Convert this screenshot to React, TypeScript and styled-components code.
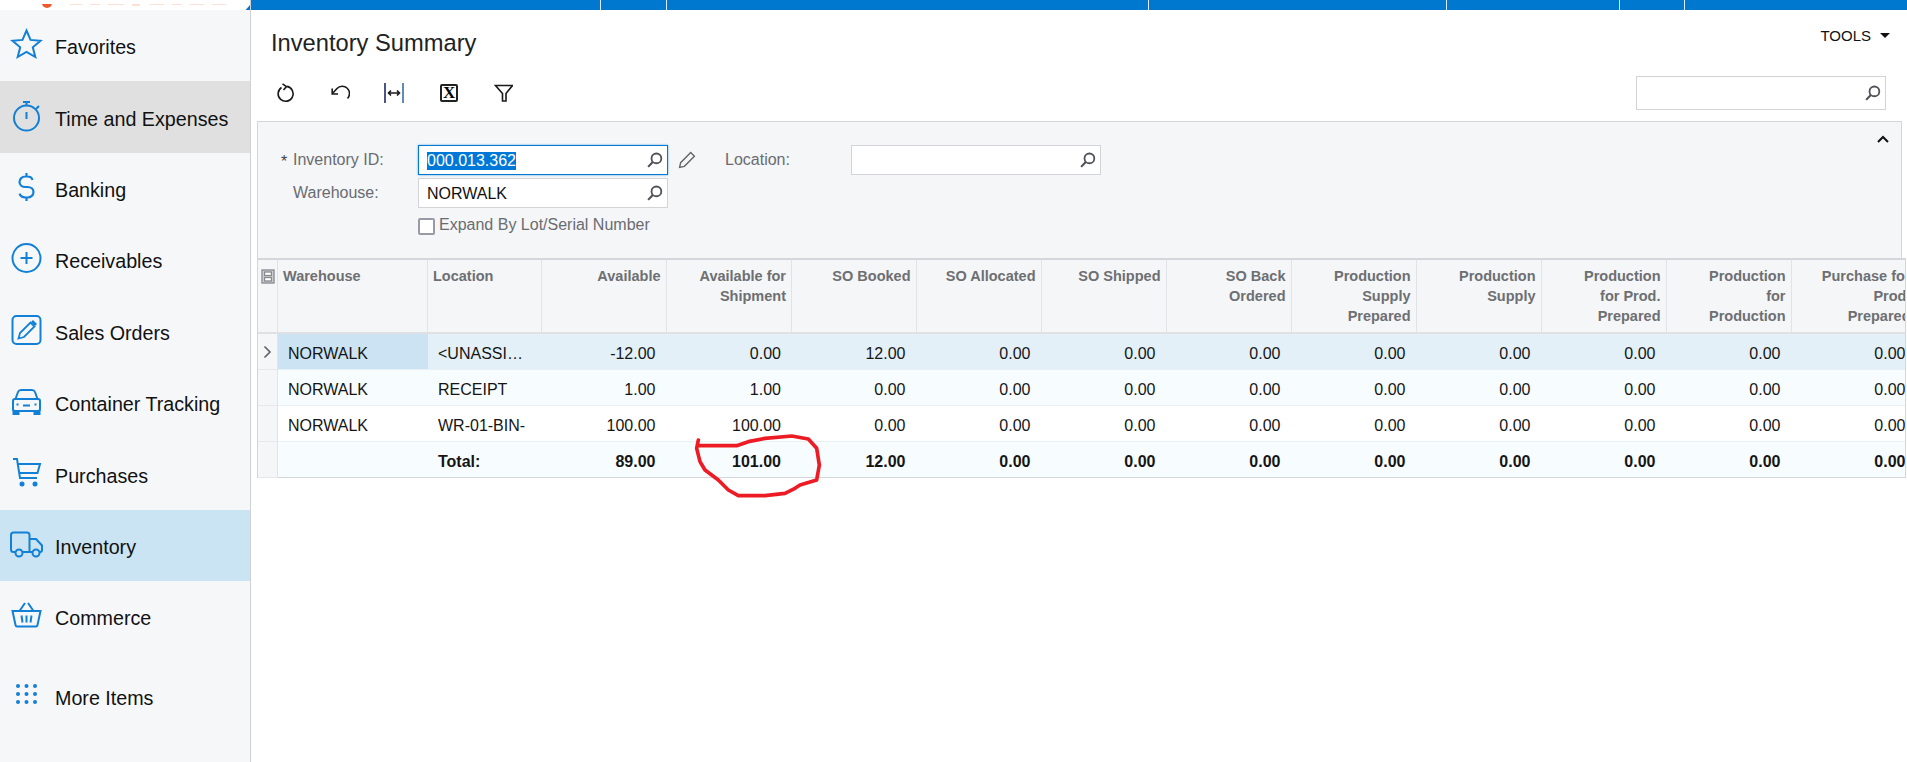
import { ReactNode } from "react";
import styled, { createGlobalStyle } from "styled-components";

const GlobalStyle = createGlobalStyle`
  html, body {
    margin: 0;
    padding: 0;
    background: #fff;
    font-family: "Liberation Sans", Arial, sans-serif;
    overflow: hidden;
  }
  * { box-sizing: border-box; }
`;

const Page = styled.div`
  position: relative;
  display: flex;
  width: 1907px;
  height: 762px;
  overflow: hidden;
`;

const Sidebar = styled.aside`
  flex: 0 0 251px;
  display: flex;
  flex-direction: column;
  background: #f6f7f9;
  border-right: 1px solid #cfd1d5;
`;

const LogoStrip = styled.div`
  height: 10px;
  background: #fff;
  overflow: hidden;
`;

const NavItem = styled.div<{ $active?: "hover" | "current"; $tall?: boolean }>`
  display: flex;
  align-items: center;
  flex: 0 0 ${(p) => (p.$tall ? "88px" : "71.4px")};
  padding-left: 10px;
  background: ${(p) =>
    p.$active === "hover" ? "#e0e0e0" : p.$active === "current" ? "#cbe4f3" : "transparent"};
`;

const NavIcon = styled.svg`
  flex: 0 0 33px;
  width: 33px;
  height: 32px;
  margin-bottom: 3px;
  fill: none;
  stroke: #1280d6;
  stroke-width: 2;
`;

const NavLabel = styled.span`
  margin-left: 12px;
  margin-top: 4px;
  font-size: 19.7px;
  color: #111;
`;

const Main = styled.main`
  flex: 1;
  min-width: 0;
  display: flex;
  flex-direction: column;
`;

const TopBar = styled.div`
  display: flex;
  height: 10px;
  background: #0078cf;
`;

const TopCell = styled.div<{ $w: number }>`
  flex: 0 0 ${(p) => p.$w}px;
  border-right: 1px solid #dcecf8;
`;

const TitleRow = styled.div`
  display: flex;
  justify-content: space-between;
  height: 65px;
  padding: 20px 17px 0 20px;
`;

const Title = styled.h1`
  margin: 0;
  font-size: 23.7px;
  font-weight: 400;
  line-height: 27px;
  color: #222;
`;

const Tools = styled.div`
  display: flex;
  align-items: center;
  gap: 9px;
  height: 10px;
  font-size: 15px;
  color: #111;
`;

const Caret = styled.span`
  width: 0;
  height: 0;
  border-left: 5px solid transparent;
  border-right: 5px solid transparent;
  border-top: 5px solid #111;
`;

const Toolbar = styled.div`
  display: flex;
  align-items: center;
  justify-content: space-between;
  height: 35px;
  padding: 0 21px 0 7px;
`;

const ToolButtons = styled.div`
  display: flex;
`;

const ToolButton = styled.div`
  flex: 0 0 54.5px;
  display: flex;
  align-items: center;
  justify-content: center;
`;

const ToolIcon = styled.svg`
  width: 20px;
  height: 20px;
  fill: none;
  stroke: #1a1a1a;
  stroke-width: 1.6;
`;

const ExcelBox = styled.span`
  display: flex;
  align-items: center;
  justify-content: center;
  width: 18px;
  height: 18px;
  margin-left: 1px;
  border: 2px solid #222;
  border-radius: 2px;
  font-family: "Liberation Serif", serif;
  font-size: 17px;
  font-weight: 700;
  line-height: 1;
  color: #000;
`;

const Field = styled.div<{ $focused?: boolean; $h?: number }>`
  flex: 0 0 250px;
  display: flex;
  align-items: center;
  justify-content: space-between;
  width: 250px;
  height: ${(p) => p.$h ?? 30}px;
  padding: 1px 4px 0 8px;
  background: #fff;
  border: 1px solid ${(p) => (p.$focused ? "#0078d4" : "#d2d4d8")};
  box-shadow: ${(p) => (p.$focused ? "0 0 2px #58a6e0" : "none")};
  font-size: 16px;
  color: #111;
`;

const Selected = styled.span`
  background: #0078d7;
  color: #fff;
`;

const SearchIcon = styled.svg`
  flex: 0 0 17px;
  width: 17px;
  height: 17px;
  fill: none;
  stroke: #4f5258;
  stroke-width: 1.7;
`;

const FormPanel = styled.section`
  position: relative;
  height: 137px;
  margin: 11px 5px 0 6px;
  padding-top: 23px;
  background: #f5f6f8;
  border: 1px solid #d4d6da;
  border-bottom: 0;
`;

const Collapse = styled.svg`
  position: absolute;
  top: 13px;
  right: 12px;
  width: 12px;
  height: 8px;
  fill: none;
  stroke: #111;
  stroke-width: 2;
`;

const FormRow = styled.div`
  display: flex;
  align-items: center;
  margin-bottom: 3px;
`;

const Label = styled.label<{ $w: number; $required?: boolean }>`
  position: relative;
  flex: 0 0 ${(p) => p.$w}px;
  padding-left: ${(p) => (p.$w > 150 ? "35px" : "0")};
  font-size: 16px;
  color: #6a6c70;
  &::before {
    content: ${(p) => (p.$required ? '"*"' : "none")};
    position: absolute;
    left: 23px;
    top: 2px;
    color: #444;
  }
`;

const PencilSlot = styled.div`
  flex: 0 0 57px;
  display: flex;
  padding-left: 10px;
`;

const CheckRow = styled.div`
  display: flex;
  align-items: flex-start;
  gap: 4px;
  margin: 8px 0 0 160px;
`;

const CheckBox = styled.span`
  flex: 0 0 17px;
  height: 17px;
  margin-top: 2px;
  background: #fff;
  border: 2px solid #9a9aa6;
  border-radius: 2px;
`;

const CheckText = styled.span`
  font-size: 16px;
  color: #6a6c70;
`;

const Table = styled.div`
  width: 1649px;
  margin-left: 6px;
  border-left: 1px solid #d4d6da;
  border-right: 1px solid #d4d6da;
  overflow: hidden;
`;

const GridRow = styled.div`
  display: grid;
  width: 1680px;
  grid-template-columns: 20px 150px 113.5px 125px 125.5px 124.5px 125px 125px 125px 125px 125px 125px 125px 125px;
`;

const HeaderCell = styled.div<{ $left?: boolean }>`
  height: 76px;
  padding: 6px 5px 0;
  background: #f5f6f8;
  border-top: 2px solid #d4d6da;
  border-right: 1px solid #e1e3e6;
  border-bottom: 2px solid #dfe1e4;
  font-size: 14.5px;
  font-weight: 700;
  line-height: 20px;
  white-space: pre-line;
  color: #6d6f72;
  text-align: ${(p) => (p.$left ? "left" : "right")};
`;

const HeaderIconCell = styled(HeaderCell)`
  padding: 9px 0 0 3px;
`;

const GripCell = styled.div<{ $h: number }>`
  display: flex;
  align-items: center;
  justify-content: center;
  height: ${(p) => p.$h}px;
  background: #f5f6f8;
  border-right: 1px solid #e1e3e6;
  border-bottom: 1px solid #e6e8ea;
`;

const Cell = styled.div<{
  $h: number;
  $left?: boolean;
  $bold?: boolean;
  $bg: string;
  $total?: boolean;
}>`
  height: ${(p) => p.$h}px;
  padding: 5px 11px 0 10px;
  display: flex;
  align-items: center;
  justify-content: ${(p) => (p.$left ? "flex-start" : "flex-end")};
  background: ${(p) => p.$bg};
  border-bottom: 1px solid ${(p) => (p.$total ? "#d4d6da" : "#e8f1f6")};
  font-size: 16px;
  font-weight: ${(p) => (p.$bold ? 700 : 400)};
  white-space: nowrap;
  color: #151515;
`;

const Annotation = styled.svg`
  position: absolute;
  left: 685px;
  top: 425px;
  width: 150px;
  height: 80px;
  fill: none;
  stroke: #ed1c24;
  stroke-width: 11;
  stroke-linejoin: round;
  stroke-linecap: round;
  pointer-events: none;
`;

const Search = () => (
  <SearchIcon viewBox="0 0 16 16">
    <circle cx="9.8" cy="6" r="4.6" />
    <path d="M6.4 9.4 2 14" strokeWidth="2" />
  </SearchIcon>
);

const icons: Record<string, ReactNode> = {
  star: <polygon points="16.5,2.5 20.5,11.9 30.5,12.7 22.8,19.3 25.3,29 16.5,23.8 7.7,29 10.2,19.3 2.5,12.7 12.5,11.9" />,
  watch: (
    <>
      <circle cx="16.5" cy="18" r="12.5" />
      <path d="M16.5 5.5V2M13 2h7M16.5 12v7M26 9l3-3" />
    </>
  ),
  dollar: (
    <path
      d="M22.5 9C22 6.8 19.8 5.5 17.5 5.5h-2C12 5.5 9.5 8 9.5 11s2.5 5 6 5h2c3.5 0 6 2 6 5s-2.5 5.5-6 5.5h-2c-3 0-5.2-1.5-6-3.8M16.5 5.5V2M16.5 26.5V30"
      strokeWidth="2.2"
    />
  ),
  plus: (
    <>
      <circle cx="16.5" cy="16" r="14" />
      <path d="M16.5 10v12M10.5 16h12" />
    </>
  ),
  edit: (
    <>
      <rect x="2.5" y="2" width="28" height="28" rx="4" />
      <path d="M8.5 24.5 10 19 20.5 8.5l4 4L14 23z" strokeWidth="1.8" />
      <path d="M21 8l2-2 4 4-2 2z" fill="#1280d6" stroke="none" />
    </>
  ),
  car: (
    <>
      <path d="M5.5 14 8 7q.8-2 3-2h11q2.2 0 3 2l2.5 7" />
      <rect x="3" y="14" width="27" height="12" rx="2" />
      <path d="M13 20.5h7M6.5 19.5h2M24.5 19.5h2" />
      <path d="M3.5 26h5v3h-5zM24.5 26h5v3h-5z" fill="#1280d6" />
    </>
  ),
  cart: (
    <>
      <path d="M3 2h4l3 19h17" />
      <path d="M8 7h22l-2.5 9H9.5" />
      <circle cx="12" cy="27" r="2.5" fill="#1280d6" stroke="none" />
      <circle cx="25" cy="27" r="2.5" fill="#1280d6" stroke="none" />
    </>
  ),
  truck: (
    <>
      <path d="M5 24H3.5Q1 24 1 21.5V7Q1 4.5 3.5 4.5H17Q19.5 4.5 19.5 7V24H13M19.5 11H26L32 17.5V22Q32 24 30 24M19.5 24H22" />
      <circle cx="9" cy="25" r="3.5" />
      <circle cx="26" cy="25" r="3.5" />
    </>
  ),
  basket: (
    <>
      <path d="M2.5 12H30.5L27.5 26Q27.2 27.5 26 27.5H7Q5.8 27.5 5.5 26Z" />
      <path d="M9.5 12 15 4M23.5 12 18 4M11.5 16.5l1 7M16.5 16.5v7M21.5 16.5l-1 7" />
    </>
  ),
  dots: (
    <g fill="#1280d6" stroke="none">
      {[8, 16.5, 25].flatMap((x) =>
        [7, 15, 23].map((y) => <circle key={`${x}-${y}`} cx={x} cy={y} r="2" />)
      )}
    </g>
  ),
};

const navItems: { label: string; icon: string; active?: "hover" | "current"; tall?: boolean }[] = [
  { label: "Favorites", icon: "star" },
  { label: "Time and Expenses", icon: "watch", active: "hover" },
  { label: "Banking", icon: "dollar" },
  { label: "Receivables", icon: "plus" },
  { label: "Sales Orders", icon: "edit" },
  { label: "Container Tracking", icon: "car" },
  { label: "Purchases", icon: "cart" },
  { label: "Inventory", icon: "truck", active: "current" },
  { label: "Commerce", icon: "basket" },
  { label: "More Items", icon: "dots", tall: true },
];

const topCells = [350, 66, 482, 298, 172.5, 65.5];

const headers = [
  "Warehouse",
  "Location",
  "Available",
  "Available for\nShipment",
  "SO Booked",
  "SO Allocated",
  "SO Shipped",
  "SO Back\nOrdered",
  "Production\nSupply\nPrepared",
  "Production\nSupply",
  "Production\nfor Prod.\nPrepared",
  "Production\nfor\nProduction",
  "Purchase for\nProd.\nPrepared",
];

const zeros = Array(8).fill("0.00");

const rows = [
  { h: 36, bg: "#e3f0f8", cells: ["NORWALK", "<UNASSI…", "-12.00", "0.00", "12.00", ...zeros] },
  { h: 36, bg: "#f7fcfe", cells: ["NORWALK", "RECEIPT", "1.00", "1.00", "0.00", ...zeros] },
  { h: 36, bg: "#ffffff", cells: ["NORWALK", "WR-01-BIN-", "100.00", "100.00", "0.00", ...zeros] },
  { h: 36, bg: "#f7fcfe", total: true, cells: ["", "Total:", "89.00", "101.00", "12.00", ...zeros] },
];

export default function App() {
  return (
    <Page>
      <GlobalStyle />
      <Sidebar>
        <LogoStrip>
          <svg width="250" height="10" viewBox="0 0 250 10">
            <circle cx="47" cy="-1" r="5" fill="#f0592a" />
            <path
              d="M70 0h12M90 0h10M108 0h16M132 1h8M150 0h14M172 0h10M190 0h14M212 0h14"
              stroke="#fde0d6"
              strokeWidth="2"
            />
            <path d="M250 1 242 10H250Z" fill="#0078cf" />
          </svg>
        </LogoStrip>
        {navItems.map((item) => (
          <NavItem key={item.label} $active={item.active} $tall={item.tall}>
            <NavIcon viewBox="0 0 33 32">{icons[item.icon]}</NavIcon>
            <NavLabel>{item.label}</NavLabel>
          </NavItem>
        ))}
      </Sidebar>

      <Main>
        <TopBar>
          {topCells.map((w, i) => (
            <TopCell key={i} $w={w} />
          ))}
        </TopBar>

        <TitleRow>
          <Title>Inventory Summary</Title>
          <Tools>
            TOOLS
            <Caret />
          </Tools>
        </TitleRow>

        <Toolbar>
          <ToolButtons>
            <ToolButton>
              <ToolIcon viewBox="0 0 20 20">
                <path d="M6.5 4.5A7.5 7.5 0 1 0 12 3.4" />
                <path d="M7.5 .8 11.5 3.6 8.5 7" />
              </ToolIcon>
            </ToolButton>
            <ToolButton>
              <ToolIcon viewBox="0 0 20 20">
                <path d="M17.5 15.5A6.8 6.8 0 0 0 7 5.5L2.5 10.5" />
                <path d="M2.2 5.5V11H8" />
              </ToolIcon>
            </ToolButton>
            <ToolButton>
              <ToolIcon viewBox="0 0 20 20">
                <path d="M1 0v20" stroke="#1c2a6b" />
                <path d="M19 0v20" stroke="#3a6ea5" />
                <path d="M4.5 10h11M7 7.5 4.5 10 7 12.5M13 7.5 15.5 10 13 12.5" />
              </ToolIcon>
            </ToolButton>
            <ToolButton>
              <ExcelBox>X</ExcelBox>
            </ToolButton>
            <ToolButton>
              <ToolIcon viewBox="0 0 20 20">
                <path d="M2.5 2.5H19.5L13 10.5V18H9.5V10.5Z" />
              </ToolIcon>
            </ToolButton>
          </ToolButtons>
          <Field $h={34}>
            <span />
            <Search />
          </Field>
        </Toolbar>

        <FormPanel>
          <Collapse viewBox="0 0 12 8">
            <path d="M1 7 6 2l5 5" />
          </Collapse>
          <FormRow>
            <Label $w={160} $required>
              Inventory ID:
            </Label>
            <Field $focused>
              <Selected>000.013.362</Selected>
              <Search />
            </Field>
            <PencilSlot>
              <svg width="18" height="18" viewBox="0 0 17 17" fill="none" stroke="#666" strokeWidth="1.3">
                <path d="M1.5 15.5 2.5 11 12 1.5l3.5 3.5L6 14.5z" />
              </svg>
            </PencilSlot>
            <Label $w={126}>Location:</Label>
            <Field>
              <span />
              <Search />
            </Field>
          </FormRow>
          <FormRow>
            <Label $w={160}>Warehouse:</Label>
            <Field>
              NORWALK
              <Search />
            </Field>
          </FormRow>
          <CheckRow>
            <CheckBox />
            <CheckText>Expand By Lot/Serial Number</CheckText>
          </CheckRow>
        </FormPanel>

        <Table>
          <GridRow>
            <HeaderIconCell $left>
              <svg width="14" height="15" viewBox="0 0 14 15" fill="#fff" stroke="#85888c" strokeWidth="1.3">
                <rect x="1" y="1" width="12" height="13" fill="#d5d8db" />
                <rect x="3.5" y="3" width="7" height="3.5" />
                <rect x="3.5" y="8.5" width="7" height="3.5" />
              </svg>
            </HeaderIconCell>
            {headers.map((h, i) => (
              <HeaderCell key={h} $left={i < 2}>
                {h}
              </HeaderCell>
            ))}
          </GridRow>
          {rows.map((row, r) => (
            <GridRow key={r}>
              <GripCell $h={row.h}>
                {r === 0 && (
                  <svg width="9" height="14" viewBox="0 0 9 14" fill="none" stroke="#5d6066" strokeWidth="1.6">
                    <path d="M1.5 1.5 7 7l-5.5 5.5" />
                  </svg>
                )}
              </GripCell>
              {row.cells.map((c, i) => (
                <Cell
                  key={i}
                  $h={row.h}
                  $left={i < 2}
                  $bold={row.total}
                  $total={row.total}
                  $bg={r === 0 && i === 0 ? "#cbe3f3" : row.bg}
                >
                  {c}
                </Cell>
              ))}
            </GridRow>
          ))}
        </Table>
      </Main>

      <Annotation viewBox="0 0 450 240">
        <path d="M40 45 35 70 45 110 60 135 100 165 130 195 160 212 240 212 300 205 330 190 345 180 395 165 403 120 395 70 370 42 320 33 240 40 190 50 155 62 38 62" />
      </Annotation>
    </Page>
  );
}
